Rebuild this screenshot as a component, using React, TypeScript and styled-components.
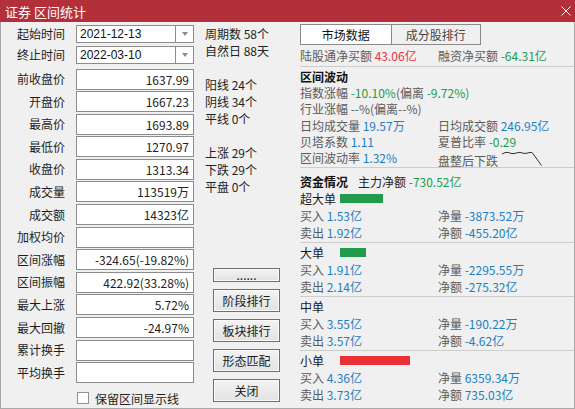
import React from "react";
import styled, { createGlobalStyle } from "styled-components";

type Tone = "red" | "green" | "blue" | "gray" | "dark";

const tones: Record<Tone, string> = {
  red: "#e8333c",
  green: "#229c4c",
  blue: "#1b80c3",
  gray: "#5b5b5b",
  dark: "#222",
};

const leftFields: { label: string; value: string }[] = [
  { label: "前收盘价", value: "1637.99" },
  { label: "开盘价", value: "1667.23" },
  { label: "最高价", value: "1693.89" },
  { label: "最低价", value: "1270.97" },
  { label: "收盘价", value: "1313.34" },
  { label: "成交量", value: "113519万" },
  { label: "成交额", value: "14323亿" },
  { label: "加权均价", value: "" },
  { label: "区间涨幅", value: "-324.65(-19.82%)" },
  { label: "区间振幅", value: "422.92(33.28%)" },
  { label: "最大上涨", value: "5.72%" },
  { label: "最大回撤", value: "-24.97%" },
  { label: "累计换手", value: "" },
  { label: "平均换手", value: "" },
];

const counts = [
  "周期数 58个",
  "自然日 88天",
  "",
  "阳线 24个",
  "阴线 34个",
  "平线 0个",
  "",
  "上涨 29个",
  "下跌 29个",
  "平盘 0个",
];

const buttons = ["......", "阶段排行", "板块排行", "形态匹配", "关闭"];

const flowGroups = [
  { name: "超大单", bar: 43, barColor: "#229c4c", buy: "1.53亿", sell: "1.92亿", vol: "-3873.52万", amt: "-455.20亿" },
  { name: "大单", bar: 26, barColor: "#229c4c", buy: "1.91亿", sell: "2.14亿", vol: "-2295.55万", amt: "-275.32亿" },
  { name: "中单", bar: 0, barColor: "#229c4c", buy: "3.55亿", sell: "3.57亿", vol: "-190.22万", amt: "-4.62亿" },
  { name: "小单", bar: 70, barColor: "#e83035", buy: "4.36亿", sell: "3.73亿", vol: "6359.34万", amt: "735.03亿" },
];

export default function App() {
  return (
    <>
      <GlobalStyle />
      <Window>
        <TitleBar>
          <span>证券 区间统计</span>
          <svg width="10" height="10" viewBox="0 0 10 10">
            <path d="M0.5 0.5 L9.5 9.5 M9.5 0.5 L0.5 9.5" stroke="#fff" strokeWidth="1" />
          </svg>
        </TitleBar>
        <Body>
          <LeftCol>
            <FieldRow $h={18} $mb={3}>
              <FieldLabel>起始时间</FieldLabel>
              <Combo>
                <ComboText>2021-12-13</ComboText>
                <ComboArrow />
              </Combo>
            </FieldRow>
            <FieldRow $h={18} $mb={4.5}>
              <FieldLabel>终止时间</FieldLabel>
              <Combo>
                <ComboText>2022-03-10</ComboText>
                <ComboArrow />
              </Combo>
            </FieldRow>
            {leftFields.map((f) => (
              <FieldRow key={f.label} $h={21} $mb={1.6}>
                <FieldLabel>{f.label}</FieldLabel>
                <ValueBox>{f.value}</ValueBox>
              </FieldRow>
            ))}
            <CheckRow>
              <CheckBox />
              <span>保留区间显示线</span>
            </CheckRow>
          </LeftCol>

          <MidCol>
            {counts.map((c, i) => (
              <CountLine key={i}>{c}</CountLine>
            ))}
            <ButtonStack>
              {buttons.map((b) => (
                <Btn key={b} $small={b === "......"}>
                  {b}
                </Btn>
              ))}
            </ButtonStack>
          </MidCol>

          <RightCol>
            <Tabs>
              <Tab $active>市场数据</Tab>
              <Tab>成分股排行</Tab>
            </Tabs>
            <TopLine>
              <span>
                <Val $c="gray">陆股通净买额 </Val>
                <Val $c="red">43.06亿</Val>
              </span>
              <span>
                <Val $c="gray">融资净买额 </Val>
                <Val $c="green">-64.31亿</Val>
              </span>
            </TopLine>
            <Sep $mt={2.5} />

            <WaveSection>
              <Heading>区间波动</Heading>
              <Full>
                <Val $c="gray">指数涨幅 </Val>
                <Val $c="green">-10.10%</Val>
                <Val $c="gray">(偏离 </Val>
                <Val $c="green"> -9.72%)</Val>
              </Full>
              <Full>
                <Val $c="gray">行业涨幅 --%(偏离--%)</Val>
              </Full>
              <span>
                <Val $c="gray">日均成交量 </Val>
                <Val $c="blue">19.57万</Val>
              </span>
              <span>
                <Val $c="gray">日均成交额 </Val>
                <Val $c="blue">246.95亿</Val>
              </span>
              <span>
                <Val $c="gray">贝塔系数 </Val>
                <Val $c="blue">1.11</Val>
              </span>
              <span>
                <Val $c="gray">夏普比率 </Val>
                <Val $c="green">-0.29</Val>
              </span>
              <span>
                <Val $c="gray">区间波动率 </Val>
                <Val $c="blue">1.32%</Val>
              </span>
              <TrendCell>
                <Val $c="gray">盘整后下跌</Val>
                <TrendIcon width="40" height="16" viewBox="0 0 40 16">
                  <polyline
                    points="0,4 3,2.6 6,2.4 9,3.4 12,3.6 15,2.8 18,2.4 21,3.2 24,3.4 27,2.6 30,2.4 39.5,15.5"
                    fill="none"
                    stroke="#333"
                    strokeWidth="1"
                  />
                </TrendIcon>
              </TrendCell>
            </WaveSection>
            <Sep $mt={0} />

            <FlowHead>
              <Heading>资金情况</Heading>
              <MainFlow>
                <Val $c="dark">主力净额 </Val>
                <Val $c="green">-730.52亿</Val>
              </MainFlow>
            </FlowHead>
            {flowGroups.map((g, i) => (
              <React.Fragment key={g.name}>
                {i > 0 && <Sep $mt={0} />}
                <FlowGroup $first={i === 0}>
                  <GroupTitle>
                    <GroupName>{g.name}</GroupName>
                    {g.bar > 0 && <Bar style={{ width: g.bar, background: g.barColor }} />}
                  </GroupTitle>
                  <span>
                    <Val $c="gray">买入 </Val>
                    <Val $c="blue">{g.buy}</Val>
                  </span>
                  <span>
                    <Val $c="gray">净量 </Val>
                    <Val $c="blue">{g.vol}</Val>
                  </span>
                  <span>
                    <Val $c="gray">卖出 </Val>
                    <Val $c="blue">{g.sell}</Val>
                  </span>
                  <span>
                    <Val $c="gray">净额 </Val>
                    <Val $c="blue">{g.amt}</Val>
                  </span>
                </FlowGroup>
              </React.Fragment>
            ))}
          </RightCol>
        </Body>
      </Window>
    </>
  );
}

const GlobalStyle = createGlobalStyle`
  html, body {
    margin: 0;
    padding: 0;
    background: #f0f0f0;
  }
  body {
    font-family: "Microsoft YaHei", "Noto Sans CJK SC", "Noto Sans", sans-serif;
    font-size: 12px;
    color: #222;
  }
  * {
    box-sizing: border-box;
  }
`;

const Window = styled.div`
  width: 575px;
  height: 409px;
  display: flex;
  flex-direction: column;
  background: #f0f0f0;
`;

const TitleBar = styled.div`
  height: 22px;
  flex: none;
  background: #b3303a;
  color: #fff;
  font-size: 13px;
  display: flex;
  align-items: center;
  justify-content: space-between;
  padding: 0 4px 0 5px;
`;

const Body = styled.div`
  flex: 1;
  display: flex;
  border: 1px solid #a8a8a8;
  border-top: none;
  min-height: 0;
`;

const LeftCol = styled.div`
  width: 193px;
  flex: none;
  display: flex;
  flex-direction: column;
  padding-top: 3px;
`;

const FieldRow = styled.div<{ $h: number; $mb: number }>`
  display: grid;
  grid-template-columns: 64px 118px;
  column-gap: 11px;
  align-items: center;
  height: ${(p) => p.$h}px;
  margin-bottom: ${(p) => p.$mb}px;
  flex: none;
`;

const FieldLabel = styled.span`
  text-align: right;
  white-space: nowrap;
  color: #1e1e1e;
  line-height: 16px;
`;

const Combo = styled.div`
  height: 100%;
  display: flex;
  background: #fff;
  border: 1px solid #8c8c8c;
`;

const ComboText = styled.span`
  flex: 1;
  padding-left: 3px;
  line-height: 16px;
  font-family: "Liberation Sans", "Noto Sans", sans-serif;
  font-size: 12px;
  color: #111;
`;

const ComboArrow = styled.span`
  width: 18px;
  border-left: 1px solid #8c8c8c;
  display: flex;
  align-items: center;
  justify-content: center;
  &::after {
    content: "";
    border-left: 3.5px solid transparent;
    border-right: 3.5px solid transparent;
    border-top: 4px solid #8a8a8a;
  }
`;

const ValueBox = styled.div`
  height: 100%;
  background: #fff;
  border: 1px solid #8c8c8c;
  text-align: right;
  padding-right: 4px;
  line-height: 19px;
  color: #222;
  white-space: nowrap;
`;

const CheckRow = styled.div`
  margin-top: 6.5px;
  margin-left: 76px;
  display: flex;
  align-items: center;
  gap: 6px;
  height: 14px;
  white-space: nowrap;
  color: #1e1e1e;
`;

const CheckBox = styled.span`
  width: 12px;
  height: 12px;
  background: #fff;
  border: 1px solid #909090;
  flex: none;
`;

const MidCol = styled.div`
  width: 106px;
  flex: none;
  display: flex;
  flex-direction: column;
  padding: 2.5px 0 6px 11px;
`;

const CountLine = styled.div`
  height: 17px;
  line-height: 17px;
  white-space: nowrap;
  color: #222;
`;

const ButtonStack = styled.div`
  margin-top: auto;
  margin-left: 8px;
  display: flex;
  flex-direction: column;
  gap: 7px;
`;

const Btn = styled.button<{ $small?: boolean }>`
  width: 67px;
  height: ${(p) => (p.$small ? 14 : 23)}px;
  padding: 0;
  border: 1px solid #6e6e6e;
  background: linear-gradient(#f3f3f3, #e2e2e2);
  box-shadow: inset 0 0 0 1px #fbfbfb;
  font-family: inherit;
  font-size: 12px;
  line-height: ${(p) => (p.$small ? 8 : 20)}px;
  color: #1a1a1a;
`;

const RightCol = styled.div`
  flex: 1;
  display: flex;
  flex-direction: column;
  padding-top: 2px;
  min-width: 0;
`;

const Tabs = styled.div`
  display: flex;
  width: 181px;
  height: 21px;
  border: 1px solid #8a8a8a;
  flex: none;
`;

const Tab = styled.div<{ $active?: boolean }>`
  width: 90px;
  text-align: center;
  line-height: 19px;
  background: ${(p) => (p.$active ? "#fff" : "#f0f0f0")};
  color: ${(p) => (p.$active ? "#111" : "#444")};
  & + & {
    border-left: 1px solid #8a8a8a;
  }
`;

const TopLine = styled.div`
  display: grid;
  grid-template-columns: 138px 1fr;
  line-height: 17px;
  margin-top: 1.5px;
  white-space: nowrap;
`;

const Sep = styled.div<{ $mt: number }>`
  height: 1px;
  flex: none;
  background: #cdcdcd;
  margin-top: ${(p) => p.$mt}px;
`;

const Val = styled.span<{ $c: Tone }>`
  color: ${(p) => tones[p.$c]};
`;

const WaveSection = styled.div`
  display: grid;
  grid-template-columns: 138px 1fr;
  grid-auto-rows: 16.3px;
  line-height: 16.3px;
  padding-top: 1.8px;
  white-space: nowrap;
`;

const Heading = styled.div`
  grid-column: 1 / -1;
  font-weight: bold;
  color: #111;
`;

const Full = styled.div`
  grid-column: 1 / -1;
`;

const TrendCell = styled.div`
  padding-top: 2.5px;
  display: flex;
  align-items: flex-start;
`;

const TrendIcon = styled.svg`
  margin-left: 4px;
  margin-top: -3px;
  flex: none;
`;

const FlowHead = styled.div`
  display: flex;
  align-items: center;
  line-height: 17px;
  padding-top: 5.5px;
  white-space: nowrap;
`;

const MainFlow = styled.span`
  margin-left: 10px;
`;

const FlowGroup = styled.div<{ $first?: boolean }>`
  display: grid;
  grid-template-columns: 138px 1fr;
  grid-auto-rows: 17px;
  line-height: 17px;
  padding: ${(p) => (p.$first ? "0 0 0.5px" : "1px 0 1px")};
  white-space: nowrap;
`;

const GroupTitle = styled.div`
  grid-column: 1 / -1;
  display: flex;
  align-items: center;
`;

const GroupName = styled.span`
  width: 40px;
  color: #1a1a1a;
`;

const Bar = styled.span`
  height: 9px;
  display: block;
`;
